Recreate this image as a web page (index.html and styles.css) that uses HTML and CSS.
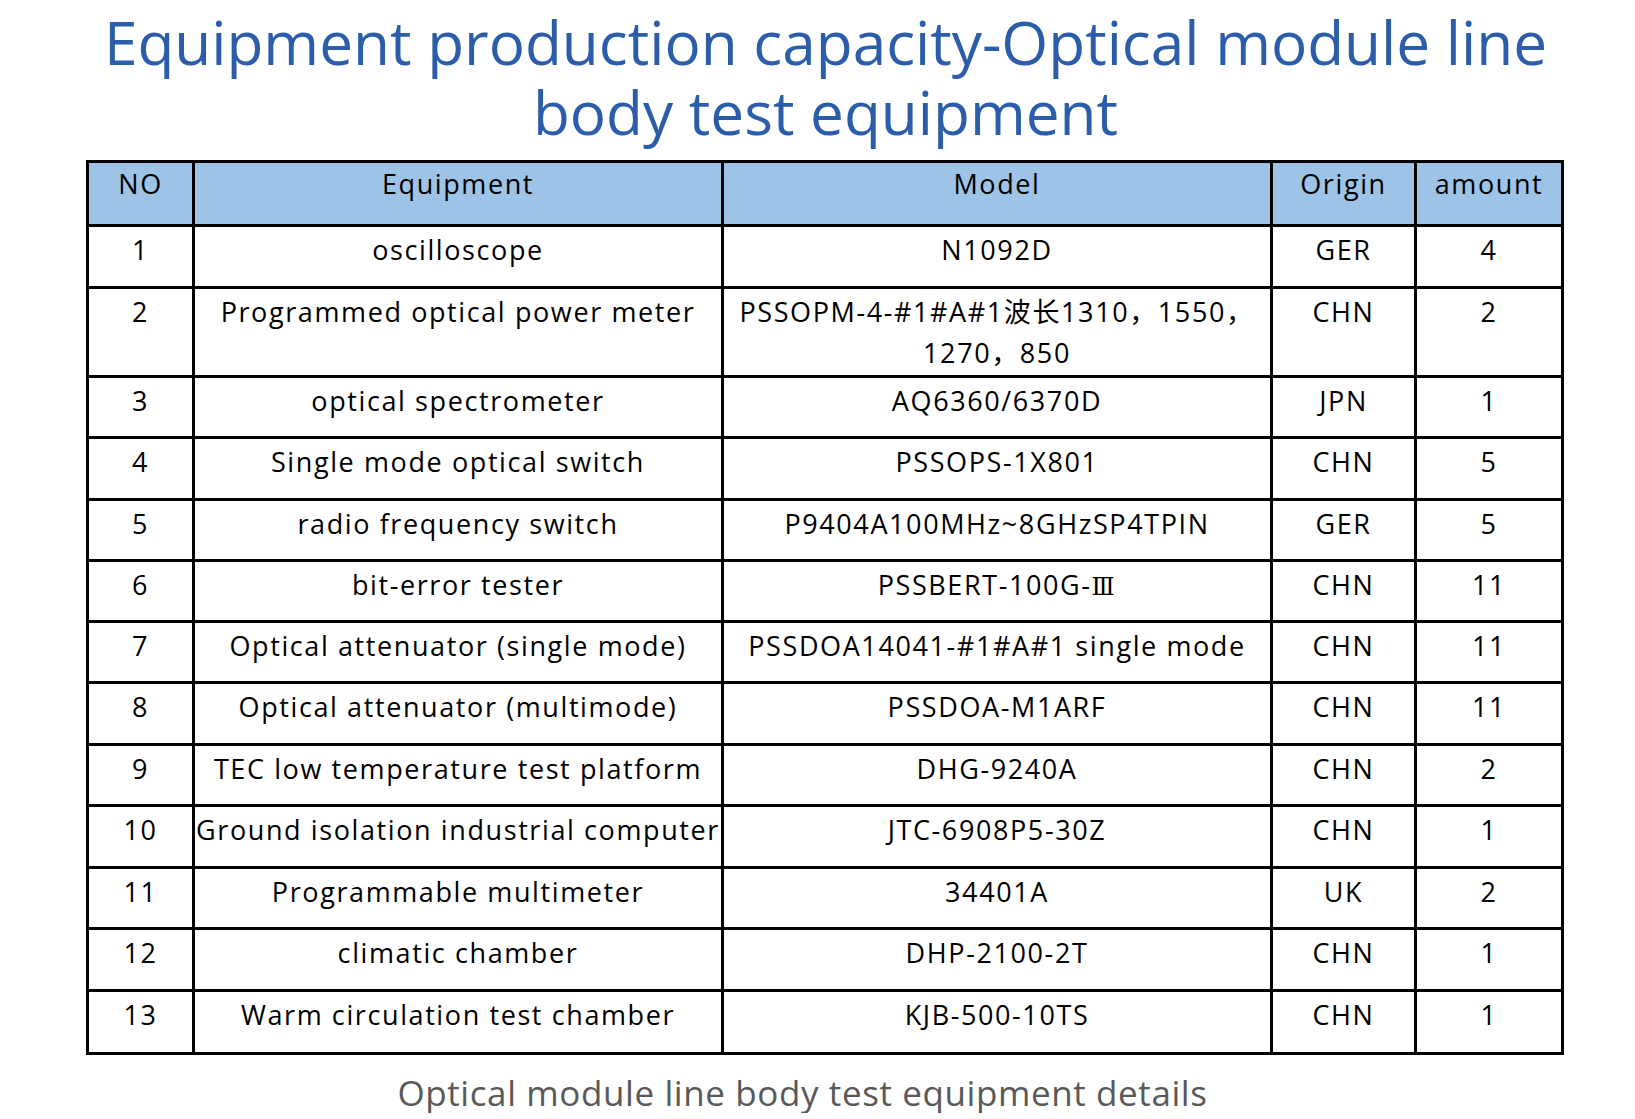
FILE: index.html
```html
<!DOCTYPE html>
<html lang="en">
<head>
<meta charset="utf-8">
<title>Equipment production capacity</title>
<link rel="stylesheet" href="styles.css">
</head>
<body>
<div class="page">
  <h1 class="title">Equipment production capacity-Optical module line<br>body test equipment</h1>
  <table class="equip">
    <colgroup>
      <col class="c-no"><col class="c-eq"><col class="c-model"><col class="c-origin"><col class="c-amount">
    </colgroup>
    <thead>
      <tr class="r-head"><th>NO</th><th>Equipment</th><th>Model</th><th>Origin</th><th>amount</th></tr>
    </thead>
    <tbody>
      <tr class="h62"><td>1</td><td>oscilloscope</td><td>N1092D</td><td>GER</td><td>4</td></tr>
      <tr class="h89"><td>2</td><td>Programmed optical power meter</td><td>PSSOPM-4-#1#A#1波长1310，1550，<br>1270，850</td><td>CHN</td><td>2</td></tr>
      <tr class="h61"><td>3</td><td>optical spectrometer</td><td>AQ6360/6370D</td><td>JPN</td><td>1</td></tr>
      <tr class="h62"><td>4</td><td>Single mode optical switch</td><td>PSSOPS-1X801</td><td>CHN</td><td>5</td></tr>
      <tr class="h61"><td>5</td><td>radio frequency switch</td><td>P9404A100MHz~8GHzSP4TPIN</td><td>GER</td><td>5</td></tr>
      <tr class="h61"><td>6</td><td>bit-error tester</td><td>PSSBERT-100G-<span class="roman">Ⅲ</span></td><td>CHN</td><td>11</td></tr>
      <tr class="h61"><td>7</td><td>Optical attenuator (single mode)</td><td>PSSDOA14041-#1#A#1 single mode</td><td>CHN</td><td>11</td></tr>
      <tr class="h62"><td>8</td><td>Optical attenuator (multimode)</td><td>PSSDOA-M1ARF</td><td>CHN</td><td>11</td></tr>
      <tr class="h61"><td>9</td><td>TEC low temperature test platform</td><td>DHG-9240A</td><td>CHN</td><td>2</td></tr>
      <tr class="h62"><td>10</td><td>Ground isolation industrial computer</td><td>JTC-6908P5-30Z</td><td>CHN</td><td>1</td></tr>
      <tr class="h61"><td>11</td><td>Programmable multimeter</td><td>34401A</td><td>UK</td><td>2</td></tr>
      <tr class="h62"><td>12</td><td>climatic chamber</td><td>DHP-2100-2T</td><td>CHN</td><td>1</td></tr>
      <tr class="h63"><td>13</td><td>Warm circulation test chamber</td><td>KJB-500-10TS</td><td>CHN</td><td>1</td></tr>
    </tbody>
  </table>
  <p class="caption">Optical module line body test equipment details</p>
</div>
</body>
</html>
```

FILE: styles.css
```css
html, body {
  margin: 0;
  padding: 0;
  background: #ffffff;
}

body {
  font-family: "Open Sans", "Noto Sans CJK SC", sans-serif;
  color: #000000;
}

.page {
  width: 1635px;
  display: flex;
  flex-direction: column;
  align-items: center;
}

.title {
  margin: 0;
  padding-top: 7px;
  font-size: 60.3px;
  line-height: 70px;
  font-weight: 400;
  color: #2b5dab;
  text-align: center;
  position: relative;
  left: 8px;
}

.equip {
  margin-top: 13px;
  margin-left: 15px;
  width: 1478px;
  table-layout: fixed;
  border-collapse: separate;
  border-spacing: 0;
  border-left: 3px solid #000;
  border-top: 3px solid #000;
  font-size: 27px;
  letter-spacing: 1.6px;
  line-height: 41px;
}

.c-no { width: 106px; }
.c-eq { width: 529px; }
.c-model { width: 549px; }
.c-origin { width: 144px; }
.c-amount { width: 147px; }

.equip th,
.equip td {
  box-sizing: border-box;
  border-right: 3px solid #000;
  border-bottom: 3px solid #000;
  padding: 2px 0 0;
  text-align: center;
  vertical-align: top;
  font-weight: 400;
  white-space: nowrap;
}

.equip th {
  background: #9dc3e6;
  padding-top: 0;
}

.roman {
  font-family: "DejaVu Serif", "Noto Sans CJK SC", serif;
  font-size: 24px;
}

.r-head th { height: 64px; }
.h61 td { height: 61px; }
.h62 td { height: 62px; }
.h63 td { height: 63px; }
.h89 td { height: 89px; }

.caption {
  margin: 18px 0 0;
  padding-right: 30px;
  font-size: 35px;
  letter-spacing: 0.6px;
  line-height: 40px;
  color: #595959;
}
```
